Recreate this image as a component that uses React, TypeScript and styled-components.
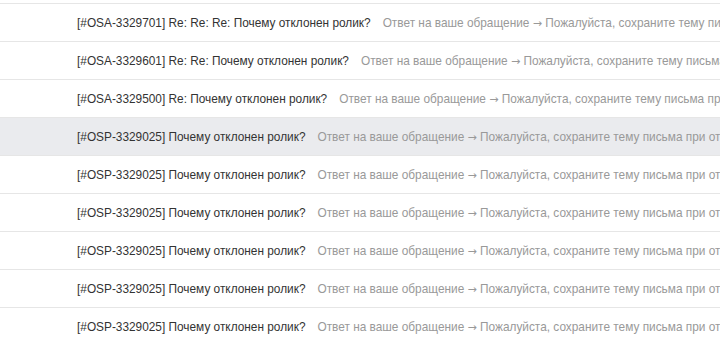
import styled, { createGlobalStyle } from "styled-components";

const GlobalStyle = createGlobalStyle`
  html, body {
    margin: 0;
    padding: 0;
    background: #fff;
    overflow: hidden;
  }
  body {
    font-family: "Liberation Sans", Arial, sans-serif;
  }
`;

interface Mail {
  subject: string;
  active?: boolean;
}

const mails: Mail[] = [
  { subject: "[#OSA-3329701] Re: Re: Re: Почему отклонен ролик?" },
  { subject: "[#OSA-3329601] Re: Re: Почему отклонен ролик?" },
  { subject: "[#OSA-3329500] Re: Почему отклонен ролик?" },
  { subject: "[#OSP-3329025] Почему отклонен ролик?", active: true },
  { subject: "[#OSP-3329025] Почему отклонен ролик?" },
  { subject: "[#OSP-3329025] Почему отклонен ролик?" },
  { subject: "[#OSP-3329025] Почему отклонен ролик?" },
  { subject: "[#OSP-3329025] Почему отклонен ролик?" },
  { subject: "[#OSP-3329025] Почему отклонен ролик?" },
];

function App() {
  return (
    <>
      <GlobalStyle />
      <Page>
        <List>
          {mails.map((m, i) => (
            <Row key={i} $active={m.active}>
              <Subject>{m.subject}</Subject>
              <Preview>
                Ответ на ваше обращение <Arrow>→</Arrow> Пожалуйста, сохраните
                тему письма при ответе на это сообщение
              </Preview>
            </Row>
          ))}
        </List>
      </Page>
    </>
  );
}

const Page = styled.div`
  width: 720px;
  height: 340px;
  padding-top: 3px;
  box-sizing: border-box;
  overflow: hidden;
`;

const List = styled.ul`
  list-style: none;
  margin: 0;
  padding: 0;
  border-top: 1px solid #e6e6e6;
`;

const Row = styled.li<{ $active?: boolean }>`
  display: flex;
  align-items: center;
  gap: 12px;
  height: 37px;
  padding-left: 77px;
  border-bottom: 1px solid #e6e6e6;
  background: ${(p) => (p.$active ? "#eaebee" : "#fff")};
  font-size: 11.85px;
  white-space: nowrap;
  overflow: hidden;
`;

const Subject = styled.span`
  color: #333;
  flex-shrink: 0;
`;

const Preview = styled.span`
  color: #999;
  flex-shrink: 0;
`;

const Arrow = styled.span`
  font-family: "DejaVu Sans", sans-serif;
  font-size: 11px;
`;

export default App;
